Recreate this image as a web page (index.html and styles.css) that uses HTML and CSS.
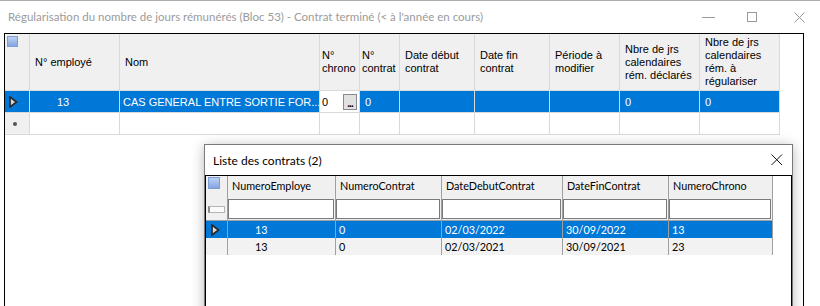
FILE: index.html
```html
<!DOCTYPE html>
<html lang="fr">
<head>
    <meta charset="UTF-8">
    <title>Régularisation du nombre de jours rémunérés</title>
    <link rel="stylesheet" href="styles.css">
</head>
<body>
<div class="app">

    <div class="titlebar">
        <span class="title">Régularisation du nombre de jours rémunérés (Bloc 53) - Contrat terminé (&lt; à l'année en cours)</span>
        <div class="controls">
            <svg class="ctl ctl-min" width="14" height="12" viewBox="0 0 14 12"><line x1="0" y1="6.5" x2="13" y2="6.5" stroke="#9a9a9a" stroke-width="1"/></svg>
            <svg class="ctl ctl-max" width="11" height="11" viewBox="0 0 11 11"><rect x="0.5" y="0.5" width="9" height="9" fill="none" stroke="#9a9a9a" stroke-width="1"/></svg>
            <svg class="ctl ctl-close" width="11" height="11" viewBox="0 0 11 11"><path d="M0.5 0.5 L10.5 10.5 M10.5 0.5 L0.5 10.5" stroke="#9a9a9a" stroke-width="1"/></svg>
        </div>
    </div>

    <div class="grid main-grid">
        <div class="row head">
            <div class="cell rh rh-top"><span class="select-all"></span></div>
            <div class="cell">N° employé</div>
            <div class="cell">Nom</div>
            <div class="cell narrow">N°<br>chrono</div>
            <div class="cell narrow">N°<br>contrat</div>
            <div class="cell">Date début<br>contrat</div>
            <div class="cell">Date fin<br>contrat</div>
            <div class="cell">Période à<br>modifier</div>
            <div class="cell">Nbre de jrs<br>calendaires<br>rém. déclarés</div>
            <div class="cell">Nbre de jrs<br>calendaires<br>rém. à<br>régulariser</div>
        </div>
        <div class="row sel">
            <div class="cell rh">
                <svg class="cur" width="9" height="12" viewBox="0 0 9 12"><path d="M1 1 L7.5 6 L1 11 Z" fill="#d8d8d8" stroke="#2a2a2a" stroke-width="1.7" stroke-linejoin="miter"/></svg>
            </div>
            <div class="cell num">13</div>
            <div class="cell name">CAS GENERAL ENTRE SORTIE FOR...</div>
            <div class="cell edit">0<span class="ellipsis-btn">...</span></div>
            <div class="cell">0</div>
            <div class="cell"></div>
            <div class="cell"></div>
            <div class="cell"></div>
            <div class="cell">0</div>
            <div class="cell">0</div>
        </div>
        <div class="row new">
            <div class="cell rh"><span class="new-mark"></span></div>
            <div class="cell"></div>
            <div class="cell"></div>
            <div class="cell"></div>
            <div class="cell"></div>
            <div class="cell"></div>
            <div class="cell"></div>
            <div class="cell"></div>
            <div class="cell"></div>
            <div class="cell"></div>
        </div>
    </div>

    <div class="dialog">
        <div class="dlg-title">
            <span>Liste des contrats (2)</span>
            <svg class="dlg-close" width="12" height="12" viewBox="0 0 12 12"><path d="M0.5 0.5 L11 11 M11 0.5 L0.5 11" stroke="#111" stroke-width="1"/></svg>
        </div>
        <div class="pop-grid">
            <div class="prow phead">
                <div class="pcell rh"><span class="select-all"></span></div>
                <div class="pcell">NumeroEmploye</div>
                <div class="pcell">NumeroContrat</div>
                <div class="pcell">DateDebutContrat</div>
                <div class="pcell">DateFinContrat</div>
                <div class="pcell">NumeroChrono</div>
            </div>
            <div class="prow pfilter">
                <div class="pcell rh"><span class="mini-box"></span></div>
                <div class="pcell"><span class="fbox"></span></div>
                <div class="pcell"><span class="fbox"></span></div>
                <div class="pcell"><span class="fbox"></span></div>
                <div class="pcell"><span class="fbox"></span></div>
                <div class="pcell"><span class="fbox"></span></div>
            </div>
            <div class="prow psel">
                <div class="pcell rh">
                    <svg class="cur" width="9" height="12" viewBox="0 0 9 12"><path d="M1 1 L7.5 6 L1 11 Z" fill="#dcdcdc" stroke="#2a2a2a" stroke-width="1.7"/></svg>
                </div>
                <div class="pcell num">13</div>
                <div class="pcell">0</div>
                <div class="pcell">02/03/2022</div>
                <div class="pcell">30/09/2022</div>
                <div class="pcell">13</div>
            </div>
            <div class="prow palt">
                <div class="pcell rh"></div>
                <div class="pcell num">13</div>
                <div class="pcell">0</div>
                <div class="pcell">02/03/2021</div>
                <div class="pcell">30/09/2021</div>
                <div class="pcell">23</div>
            </div>
        </div>
    </div>

</div>
</body>
</html>
```

FILE: styles.css
```css
body {
    margin: 0;
    padding: 0;
    background-color: #fff;
    font-family: "Liberation Sans", Arial, sans-serif;
}
.app {
    position: relative;
    width: 820px;
    height: 306px;
    overflow: hidden;
    background-color: #fff;
    border-top: 1px solid #acacac;
    box-sizing: border-box;
}

/* window title */
.titlebar {
    height: 32px;
    display: flex;
    align-items: center;
    justify-content: space-between;
    padding-left: 8px;
}
.title {
    font-family: Lato, "Noto Sans", sans-serif;
    font-size: 11.5px;
    color: #9b9b9b;
    margin-top: -1px;
}
.controls {
    display: flex;
    align-items: center;
    height: 100%;
}
.ctl {
    display: block;
}
.ctl-min {
    margin-right: 31px;
}
.ctl-max {
    margin-right: 36px;
}
.ctl-close {
    margin-right: 15px;
}

/* main grid */
.main-grid {
    margin-left: 4px;
    width: 800px;
    height: 290px;
    box-sizing: border-box;
    border: 1px solid #000;
    font-size: 11px;
    color: #000;
}
.row {
    display: grid;
    grid-template-columns: 25px 90px 200px 40px 40px 75px 75px 70px 80px 80px;
}
.cell {
    box-sizing: border-box;
    border-right: 1px solid #d9d9d9;
    border-bottom: 1px solid #d9d9d9;
    padding-left: 5px;
    display: flex;
    align-items: center;
    white-space: nowrap;
    overflow: hidden;
}
.head .cell {
    height: 57px;
    background-color: #f0f0f0;
    line-height: 13px;
}
.head .narrow {
    padding-left: 2px;
}
.head .rh-top {
    align-items: flex-start;
    padding: 2px 0 0 2px;
}
.select-all {
    display: block;
    width: 9px;
    height: 9px;
    border: 1px solid #7c9cd6;
    background: linear-gradient(#bcd0f4, #84a5e0);
}
.sel .cell {
    height: 22px;
    background-color: #0078d7;
    color: #fff;
}
.sel .rh {
    padding-left: 4px;
}
.sel .num {
    padding-left: 27px;
}
.sel .name {
    padding-left: 3px;
}
.sel .edit {
    background-color: #fff;
    color: #000;
    padding-left: 2px;
    padding-right: 2px;
    justify-content: space-between;
}
.ellipsis-btn {
    box-sizing: border-box;
    width: 14px;
    height: 16px;
    border: 1px solid #8a8a8a;
    background-color: #e1e1e1;
    font-size: 10px;
    font-weight: bold;
    line-height: 18px;
    text-align: center;
    letter-spacing: -1px;
    color: #000;
}
.new .cell {
    height: 22px;
    background-color: #fff;
}
.new .rh {
    background-color: #f0f0f0;
    padding-left: 8px;
}
.new-mark {
    display: block;
    width: 4px;
    height: 4px;
    border-radius: 50%;
    background-color: #555;
}
.cur {
    display: block;
}

/* contract list dialog */
.dialog {
    position: absolute;
    left: 204px;
    top: 143px;
    width: 589px;
    height: 200px;
    box-sizing: border-box;
    border: 1px solid #7a7a7a;
    background-color: #fff;
    box-shadow: 0 2px 12px rgba(0, 0, 0, 0.28);
}
.dlg-title {
    height: 30px;
    display: flex;
    align-items: center;
    justify-content: space-between;
    padding-left: 8px;
    padding-right: 9px;
    font-family: Lato, "Noto Sans", sans-serif;
    font-size: 12px;
    color: #000;
}
.dlg-close {
    display: block;
}
.pop-grid {
    height: 200px;
    box-sizing: border-box;
    border: 1px solid #000;
    font-family: Lato, "Noto Sans", sans-serif;
    font-size: 10.8px;
}
.prow {
    display: grid;
    grid-template-columns: 22px 108px 106px 121px 106px 104px;
}
.pcell {
    box-sizing: border-box;
    border-right: 1px solid #a0a0a0;
    padding-left: 3px;
    display: flex;
    align-items: center;
    white-space: nowrap;
    overflow: hidden;
}
.phead .pcell {
    height: 23px;
    background-color: #f0f0f0;
    padding-left: 4px;
    align-items: flex-start;
    padding-top: 3px;
}
.phead .rh {
    padding: 1px 0 0 2px;
}
.phead .select-all {
    width: 10px;
    height: 10px;
}
.pfilter .pcell {
    height: 22px;
    background-color: #f0f0f0;
    border-bottom: 1px solid #a0a0a0;
    padding: 0 1px 1px 0;
    align-items: stretch;
}
.fbox {
    flex: 1;
    border: 1px solid #7a7a7a;
    background-color: #fff;
}
.pfilter .rh {
    align-items: center;
    padding-left: 2px;
}
.mini-box {
    display: block;
    width: 14px;
    height: 5px;
    border: 1px solid #b4b4b4;
    border-left: 2px solid #8a8a8a;
    background-color: #fafafa;
}
.psel .pcell {
    height: 17px;
    background-color: #0078d7;
    color: #fff;
}
.psel .rh {
    padding-left: 5px;
}
.palt .pcell {
    height: 17px;
    background-color: #f2f2f2;
}
.prow .num {
    padding-left: 27px;
}
```
